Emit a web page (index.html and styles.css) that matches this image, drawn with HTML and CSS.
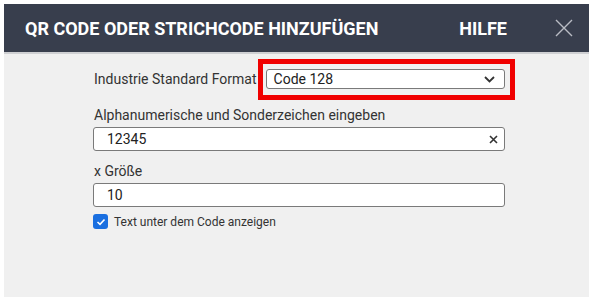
FILE: index.html
```html
<!DOCTYPE html>
<html lang="de">
<head>
<meta charset="utf-8">
<link rel="stylesheet" href="styles.css">
</head>
<body>
<div class="dialog">
  <div class="header">
    <div class="title">QR CODE ODER STRICHCODE HINZUFÜGEN</div>
    <div class="help">HILFE</div>
    <div class="close">
      <svg width="18" height="18" viewBox="0 0 18 18"><path d="M1 1 L17 17 M17 1 L1 17" stroke="#b9bcc4" stroke-width="1.4" fill="none"/></svg>
    </div>
  </div>
  <div class="body">
    <div class="row-format">
      <span class="label">Industrie Standard Format</span>
      <div class="select">
        <span>Code 128</span>
        <svg class="chev" width="11" height="7" viewBox="0 0 11 7"><path d="M1 1 L5.5 5.5 L10 1" stroke="#333" stroke-width="1.8" fill="none"/></svg>
        <div class="highlight"></div>
      </div>
    </div>
    <div class="label field-label first">Alphanumerische und Sonderzeichen eingeben</div>
    <div class="input">
      <span>12345</span>
      <svg class="clear" width="9" height="9" viewBox="0 0 9 9"><path d="M1 1 L8 8 M8 1 L1 8" stroke="#333" stroke-width="1.6" fill="none"/></svg>
    </div>
    <div class="label field-label">x Größe</div>
    <div class="input"><span>10</span></div>
    <label class="check">
      <span class="box"><svg width="10" height="8" viewBox="0 0 10 8"><path d="M1.5 4 L4 6.3 L8.5 1.5" stroke="#fff" stroke-width="1.6" fill="none"/></svg></span>
      <span>Text unter dem Code anzeigen</span>
    </label>
  </div>
</div>
</body>
</html>
```
FILE: styles.css
```css
html, body {
  margin: 0;
  padding: 0;
  background: #ffffff;
}
body {
  padding: 4px 4px 5px 4px;
  font-family: Roboto, "Liberation Sans", Arial, sans-serif;
}
.dialog {
  width: 585px;
  height: 293px;
  background: #f0f0f0;
  display: flex;
  flex-direction: column;
}
.header {
  height: 48px;
  background: #383e4d;
  border-bottom: 2px solid #cfd0d3;
  display: flex;
  align-items: center;
  color: #ffffff;
  font-weight: 700;
  font-size: 18px;
  padding-left: 21px;
  padding-right: 16px;
}
.title {
  flex: 1;
}
.help {
  margin-right: 48px;
}
.close {
  width: 18px;
  height: 18px;
  display: flex;
}
.body {
  padding: 15px 84px 0 89px;
  display: flex;
  flex-direction: column;
  color: #333333;
}
.label {
  font-size: 14px;
  line-height: 16px;
  color: #333333;
}
.row-format {
  display: flex;
  align-items: center;
  padding-left: 1px;
}
.row-format .label {
  margin-right: 9px;
}
.select {
  position: relative;
  flex: 1;
  height: 20px;
  box-sizing: border-box;
  border: 1px solid #7a7a7a;
  border-radius: 3px;
  background: #fff;
  display: flex;
  align-items: center;
  justify-content: space-between;
  padding: 0 9px 0 7px;
  font-size: 14px;
  color: #222;
}
.highlight {
  position: absolute;
  left: -9px;
  top: -11px;
  right: -11px;
  bottom: -12px;
  border: 5px solid #f00000;
}
.field-label {
  margin-top: 12px;
  padding-left: 1px;
}
.field-label.first {
  margin-top: 18px;
}
.input {
  margin-top: 4px;
  height: 24px;
  box-sizing: border-box;
  border: 1px solid #7a7a7a;
  border-radius: 3px;
  background: #fff;
  display: flex;
  align-items: center;
  justify-content: space-between;
  padding: 0 6px 0 13px;
  font-size: 14px;
  color: #222;
}
.check {
  display: flex;
  align-items: center;
  margin-top: 7px;
  font-size: 12px;
  color: #333;
}
.box {
  width: 15px;
  height: 15px;
  box-sizing: border-box;
  border-radius: 3px;
  background: #1a6fe0;
  display: flex;
  align-items: center;
  justify-content: center;
  margin-right: 6px;
}
```
